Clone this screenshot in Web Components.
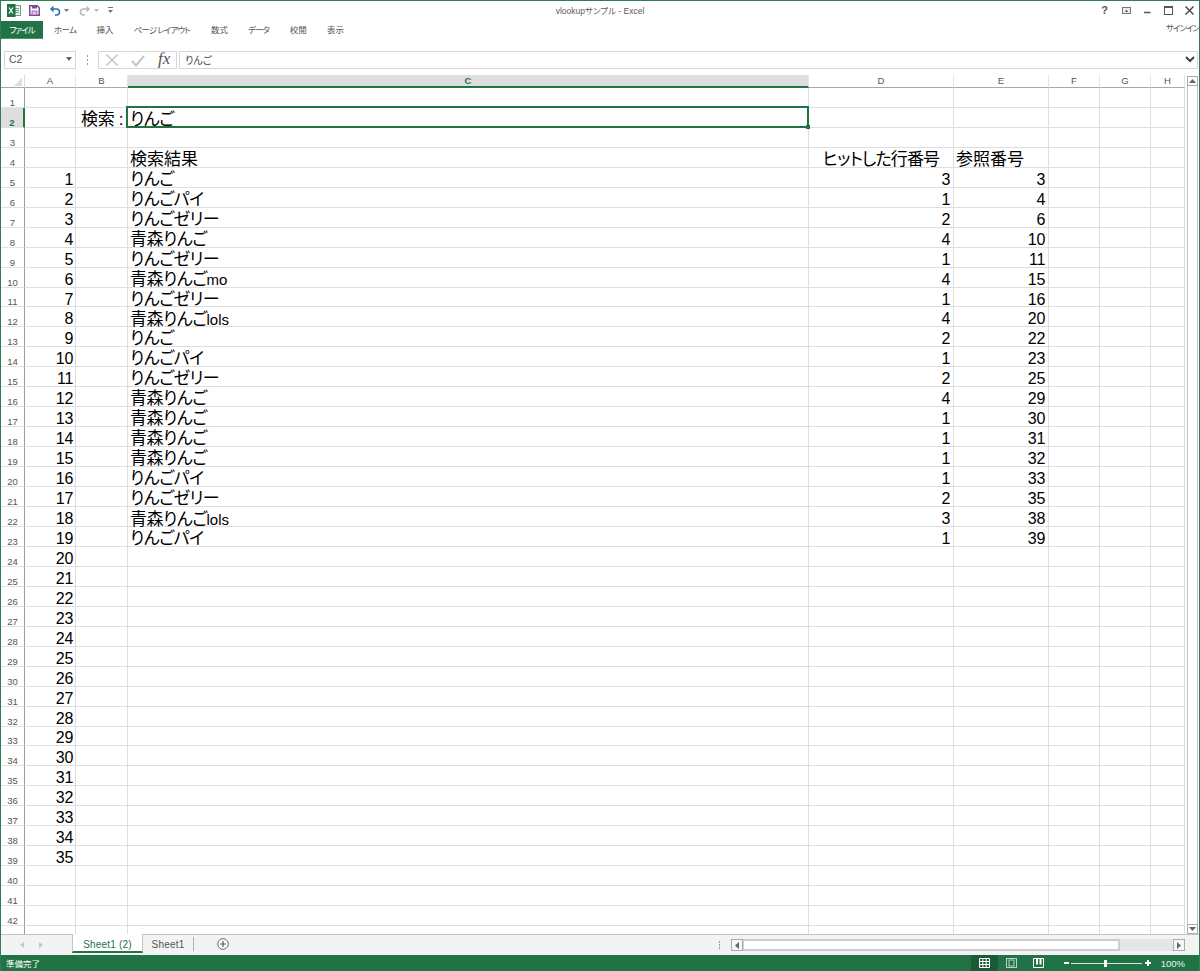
<!DOCTYPE html>
<html lang="ja"><head><meta charset="utf-8">
<style>
html,body{margin:0;padding:0;width:1200px;height:971px;overflow:hidden;background:#fff}
body{font-family:"Noto Sans CJK JP","Liberation Sans",sans-serif}
</style></head><body>
<xl-window></xl-window>
<script>
const UI='"Liberation Sans","Noto Sans CJK JP",sans-serif';
function el(name,html,cssText){
  customElements.define(name,class extends HTMLElement{
    connectedCallback(){ if(this.shadowRoot)return; const s=this.attachShadow({mode:'open'}); s.innerHTML='<style>'+cssText+'</style>'+(typeof html==='function'?html(this):html); }
  });
}
el('xl-titlebar',`
<div class="l">
<svg width="14" height="13" viewBox="0 0 14 13" style="margin-left:6px"><rect x="6.500" y="1.500" width="7" height="10" fill="#e9f1ec" stroke="#6d9a80"/><path d="M8 4.500h4M8 6.500h4M8 8.500h4" stroke="#6d9a80"/><rect x="0" y="0" width="8.500" height="13" fill="#1f7246"/><path d="M2 3.500l4 6M6 3.500l-4 6" stroke="#fff" stroke-width="1.300"/></svg>
<svg width="11" height="11" viewBox="0 0 11 11" style="margin-left:8px"><path d="M.75.750h7.500l2 2v7.500h-9.500z" fill="#fff" stroke="#80489c" stroke-width="1.500"/><rect x="3" y=".5" width="5" height="3" fill="#80489c"/><rect x="3" y="6" width="5" height="4" fill="#d9c6e4" stroke="#80489c" stroke-width=".7"/></svg>
<svg width="11" height="11" viewBox="0 0 11 11" style="margin-left:10px"><path d="M2.500 4h4a3 3 0 0 1 0 6H5" fill="none" stroke="#2f6fb0" stroke-width="1.600"/><path d="M0 4L3.500 .5v7z" fill="#2f6fb0"/></svg>
<svg width="5" height="3" viewBox="0 0 5 3" style="margin-left:3px"><path d="M0 0h5L2.500 3z" fill="#777"/></svg>
<svg width="11" height="11" viewBox="0 0 11 11" style="margin-left:10px"><path d="M8.500 4h-4a3 3 0 0 0 0 6H6" fill="none" stroke="#bbb" stroke-width="1.600"/><path d="M11 4L7.500 .5v7z" fill="#bbb"/></svg>
<svg width="5" height="3" viewBox="0 0 5 3" style="margin-left:4px"><path d="M0 0h5L2.500 3z" fill="#bbb"/></svg>
<svg width="5" height="6" viewBox="0 0 5 6" style="margin-left:9px"><path d="M0 .5h5" stroke="#777"/><path d="M0 3h5L2.500 6z" fill="#777"/></svg>
</div>
<div class="t">vlookupサンプル - Excel</div>
<div class="r">
<span class="q">?</span>
<svg width="9" height="7" viewBox="0 0 9 7" style="margin-left:14px"><rect x=".5" y=".5" width="8" height="6" fill="#eee" stroke="#777"/><path d="M3 5L4.500 2.500 6 5z" fill="#555"/></svg>
<svg width="7" height="7" viewBox="0 0 7 7" style="margin-left:13px"><path d="M0 5.500h6.500" stroke="#555" stroke-width="1.500"/></svg>
<svg width="9" height="9" viewBox="0 0 9 9" style="margin-left:13px"><rect x=".5" y=".5" width="8" height="8" fill="none" stroke="#555"/><path d="M.5 1h8" stroke="#555" stroke-width="2"/></svg>
<svg width="9" height="9" viewBox="0 0 9 9" style="margin-left:12px"><path d="M.5.500l8 8M8.500.500l-8 8" stroke="#444" stroke-width="1.400"/></svg>
</div>`,
`:host{display:flex;height:20px;box-sizing:border-box;padding-bottom:2px;align-items:center;justify-content:space-between;position:relative;font:9px ${UI};color:#555}
.l,.r{display:flex;align-items:center}.r{margin-right:5px}
.q{font:bold 11px ${UI};color:#555}
.t{position:absolute;left:0;right:0;top:3px;text-align:center;font:8.500px "Liberation Sans","Noto Sans CJK JP",sans-serif;font-feature-settings:"palt";color:#5b5b5b}`);
el('xl-ribbon',`<span class="f">ファイル</span><span class="tabs"><span style="letter-spacing:-.6px">ホーム</span><span>挿入</span><span style="letter-spacing:-.85px">ページ レイアウト</span><span style="margin-left:1px">数式</span><span style="letter-spacing:-1px">データ</span><span style="margin-left:1px">校閲</span><span>表示</span></span><span class="s">サインイン</span>`,
`:host{display:flex;height:20px;align-items:flex-start;font:8.500px "Noto Sans CJK JP",sans-serif;font-feature-settings:"palt";color:#555;position:relative}
.f{background:#217346;color:#fff;width:42px;line-height:17px;text-align:center;border-bottom:1px solid #4f9270;height:17px;letter-spacing:-1px}
.tabs{display:flex;gap:20px;margin-left:11px;line-height:16px}
.s{margin-left:auto;white-space:nowrap;line-height:12px;letter-spacing:-1px}`);
el('xl-formula',`
<div class="name"><span>C2</span><svg width="6" height="4" viewBox="0 0 6 4"><path d="M0 0h6L3 4z" fill="#666"/></svg></div>
<div class="grip"><i></i><i></i><i></i></div>
<div class="btns">
<svg width="14" height="14" viewBox="0 0 14 14"><path d="M1.500 1.500l11 11M12.500 1.500l-11 11" stroke="#c6c6c6" stroke-width="1.500"/></svg>
<svg width="14" height="14" viewBox="0 0 14 14" style="margin-left:12px"><path d="M1 8l4 4.500L13 3" fill="none" stroke="#c6c6c6" stroke-width="2"/></svg>
<span class="fx">fx</span></div>
<div class="input"><span>りんご</span><svg width="10" height="7" viewBox="0 0 10 7"><path d="M1 1l4 4 4-4" fill="none" stroke="#444" stroke-width="2"/></svg></div>`,
`:host{display:flex;height:18px;align-items:stretch;font:10px "Noto Sans CJK JP",sans-serif;font-feature-settings:"palt";color:#444;padding:0 1px 0 3px;box-sizing:border-box}
.name{width:72px;box-sizing:border-box;border:1px solid #d6d6d6;display:flex;align-items:center;justify-content:space-between;padding:0 3px 2px 4px;font:10.500px ${UI};color:#555}
.grip{width:22px;display:flex;flex-direction:column;align-items:center;justify-content:center;gap:2px}.grip i{width:1px;height:2px;background:#999;display:block}
.btns{width:79px;box-sizing:border-box;border:1px solid #d6d6d6;display:flex;align-items:center;padding-left:6px}
.fx{font:italic 17px "Liberation Serif",serif;margin-left:13px;color:#555;margin-top:-2px}
.input{flex:1;margin:0 0 0 2px;border:1px solid #d6d6d6;display:flex;align-items:center;justify-content:space-between;padding:0 2px 2px 5px}`);
const COLS=[['A',51],['B',52],['C',681],['D',145],['E',95],['F',51],['G',51],['H',34]];
const RH=19.96, ROWS=43;
const DATA=[['りんご',3,3],['りんごパイ',1,4],['りんごゼリー',2,6],['青森りんご',4,10],['りんごゼリー',1,11],['青森りんご<b>mo</b>',4,15],['りんごゼリー',1,16],['青森りんご<b>lols</b>',4,20],['りんご',2,22],['りんごパイ',1,23],['りんごゼリー',2,25],['青森りんご',4,29],['青森りんご',1,30],['青森りんご',1,31],['青森りんご',1,32],['りんごパイ',1,33],['りんごゼリー',2,35],['青森りんご<b>lols</b>',3,38],['りんごパイ',1,39]];
el('xl-grid',()=>{
  let h='<div class="corner"><svg width="8" height="8" viewBox="0 0 8 8"><path d="M8 0v8H0z" fill="#dcdcdc"/></svg></div>';
  COLS.forEach(([n])=>{h+=`<div class="ch${n==='C'?' sel':''}">${n}</div>`});
  for(let r=1;r<=ROWS;r++){
    h+=`<div class="rh${r===2?' sel':''}"><span>${r<43?r:''}</span></div>`;
    COLS.forEach(([n])=>{
      let t='',c='';
      if(n==='A'&&r>=5&&r<=39){t=r-4;c=' num'}
      if(n==='B'&&r===2){t='検索 :';c=' lbl'}
      if(n==='C'){c=' k'}
      if(n==='C'&&r===2){t='りんご'}
      if(n==='C'&&r===4){t='検索結果';c=' h'}
      if(n==='D'&&r===4){t='ヒットした行番号';c=' ctr'}
      if(n==='E'&&r===4){t='参照番号';c=' h'}
      const d=DATA[r-5];
      if(d){ if(n==='C')t=d[0]; if(n==='D'){t=d[1];c=' num r3'} if(n==='E'){t=d[2];c=' num r3'} }
      h+=`<div class="c${c}"><span>${t}</span></div>`;
    });
  }
  h+='<div class="cursor"><i></i></div>';
  return h;
},`:host{display:grid;grid-template-columns:24px ${COLS.map(c=>c[1]+'px').join(' ')};grid-template-rows:13px repeat(${ROWS},${RH}px);position:relative;height:859px;overflow:hidden;align-content:start;font:17px "Liberation Sans","Noto Sans CJK JP",sans-serif;font-feature-settings:"palt";color:#000}
.corner{background:#fff;border-right:1px solid #dcdcdc;border-bottom:1px solid #a8a8a8;box-sizing:border-box;display:flex;align-items:flex-end;justify-content:flex-end;padding:0 2px 1px 0}
.ch{font:9.500px ${UI};color:#555;text-align:center;line-height:12px;border-right:1px solid #e4e4e4;border-bottom:1px solid #a8a8a8;box-sizing:border-box}
.ch.sel{background:#dedede;color:#217346;font-weight:bold;border-bottom:2px solid #217346}
.rh{font:9.500px ${UI};color:#555;border-right:1px solid #9e9e9e;border-bottom:1px solid #e2e2e2;box-sizing:border-box;text-align:center;display:flex;align-items:flex-end;justify-content:center;line-height:8px}
.rh span{display:block}
.rh.sel{background:#dedede;color:#217346;font-weight:bold;border-right:2px solid #217346}
.c{border-right:1px solid #dedede;border-bottom:1px solid #dedede;box-sizing:border-box;white-space:nowrap;display:flex;align-items:center;padding:5px 2px 0 3px;line-height:16px;min-width:0}
.c>span{display:block}
.k,.h{padding-left:2px}.k{letter-spacing:-.5px}
.c b{font:15px "Liberation Sans",sans-serif;letter-spacing:0}
.num{justify-content:flex-end;font:16px "Liberation Sans",sans-serif;letter-spacing:-.3px;padding:5px 2px 0 3px}
.r3{padding-right:3px}
.lbl{padding-left:5px;letter-spacing:-.3px}.ctr{justify-content:center;padding-left:0;padding-right:0;letter-spacing:-.85px}
.cursor{position:absolute;left:125px;top:31px;width:683px;height:22px;box-sizing:border-box;border:2px solid #217346;pointer-events:none}
.cursor i{position:absolute;right:-3px;bottom:-3px;width:4px;height:4px;background:#217346}`);
el('xl-vscroll',`<div class="b"><svg width="7" height="4" viewBox="0 0 7 4"><path d="M3.500 0l3.500 4H0z" fill="#666"/></svg></div><div class="tr"></div><div class="b"><svg width="7" height="4" viewBox="0 0 7 4"><path d="M0 0h7L3.500 4z" fill="#666"/></svg></div>`,
`:host{display:flex;flex-direction:column;width:11px;background:#fff;box-sizing:border-box;margin:1px 1px 0 2px;height:858px}
.b{height:10px;border:1px solid #ababab;box-sizing:border-box;display:flex;align-items:center;justify-content:center;background:#fff}
.tr{flex:1;border-left:1px solid #c4c4c4;border-right:1px solid #c4c4c4}`);
el('xl-sheetbar',`
<div class="nav"><svg width="4" height="6" viewBox="0 0 4 6"><path d="M4 0v6L0 3z" fill="#c4c4c4"/></svg><svg width="4" height="6" viewBox="0 0 4 6"><path d="M0 0v6l4-3z" fill="#c4c4c4"/></svg></div>
<div class="tab on">Sheet1 (2)</div><div class="tab">Sheet1</div><div class="sep"></div>
<svg class="add" width="12" height="12" viewBox="0 0 12 12"><circle cx="6" cy="6" r="5.300" fill="#fff" stroke="#666"/><path d="M6 3v6M3 6h6" stroke="#555" stroke-width="1.200"/></svg>
<div class="grip"><i></i><i></i><i></i></div>
<div class="hs">
<div class="b"><svg width="4" height="7" viewBox="0 0 4 7"><path d="M4 0v7L0 3.500z" fill="#666"/></svg></div>
<div class="thumb"></div><div class="rest"></div>
<div class="b"><svg width="4" height="7" viewBox="0 0 4 7"><path d="M0 0v7l4-3.500z" fill="#666"/></svg></div>
</div>`,
`:host{display:flex;height:21px;align-items:flex-start;background:#f3f3f3;border-top:1px solid #c4c4c4;box-sizing:border-box;position:relative;font:10px ${UI};letter-spacing:.2px;color:#555}
.nav{width:71px;height:20px;display:flex;gap:15px;align-items:center;justify-content:flex-start;padding-left:19px;box-sizing:border-box}
.tab{text-align:center;box-sizing:border-box}
.tab.on{box-sizing:content-box;width:69px;height:16px;padding-top:1px;line-height:20px;background:#fff;color:#217346;border-bottom:2px solid #217346;border-left:1px solid #c4c4c4;border-right:1px solid #c4c4c4;margin-top:-1px}
.tab:not(.on){width:50px;line-height:19px}
.sep{width:1px;height:14px;background:#b0b0b0;margin-top:2px}
.add{margin:3px 0 0 23px}
.grip{position:absolute;left:718px;top:6px;display:flex;flex-direction:column;gap:1px}.grip i{width:1px;height:2px;background:#999;display:block}
.hs{position:absolute;left:730px;top:4px;width:454px;height:12px;display:flex;background:#e6e6e6}
.b{width:12px;height:12px;border:1px solid #ababab;box-sizing:border-box;background:#f6f6f6;display:flex;align-items:center;justify-content:center}
.thumb{width:377px;border:2px solid #cdcdcd;border-left-width:1px;background:#fff;box-sizing:border-box;height:12px}.rest{flex:1}`);
el('xl-status',`<span class="t">準備完了</span>
<div class="r">
<div class="v on"><svg width="11" height="10" viewBox="0 0 11 10"><path d="M.5.500h10v9H.5zM.5 3.500h10M.5 6.500h10M3.800.500v9M7.200.500v9" fill="none" stroke="#fff" stroke-width="1"/></svg></div>
<div class="v"><svg width="11" height="10" viewBox="0 0 11 10"><rect x=".5" y=".5" width="10" height="9" fill="none" stroke="#b9d4c5"/><rect x="3" y="2" width="5" height="6" fill="none" stroke="#b9d4c5"/></svg></div>
<div class="v"><svg width="11" height="10" viewBox="0 0 11 10"><path d="M.5.500h10v9H.5z" fill="none" stroke="#fff"/><path d="M3 .500h2v6H3zM6.500.500h2v6h-2z" fill="#fff"/></svg></div>
<span class="m"></span><div class="sl"><i></i></div><span class="p"></span><span class="z">100%</span>
</div>`,
`:host{display:flex;height:16px;background:#217346;color:#fff;align-items:center;justify-content:space-between;font:8.500px "Noto Sans CJK JP",sans-serif;position:relative}
.t{margin-left:5px}.r{display:flex;align-items:center;height:16px;margin-right:14px}
.v{width:27px;height:16px;display:flex;align-items:center;justify-content:center}.v.on{background:#1a5a38}
.m{width:5px;height:2px;background:#fff;margin-left:12px}
.p{width:6px;height:6px;margin-left:3px;background:linear-gradient(#fff,#fff) center/6px 2px no-repeat,linear-gradient(#fff,#fff) center/2px 6px no-repeat}
.sl{width:71px;height:1px;background:#d8e8de;position:relative;margin:0 0 0 2px}
.sl i{position:absolute;left:33px;top:-3px;width:3px;height:7px;background:#fff}
.z{font:9.500px ${UI};margin-left:10px;color:#eaf3ee}`);
el('xl-window',`<div class="win"><xl-titlebar></xl-titlebar><xl-ribbon></xl-ribbon><div class="gap"></div><xl-formula></xl-formula><div class="gap2"></div><div class="main"><xl-grid></xl-grid><xl-vscroll></xl-vscroll></div><xl-sheetbar></xl-sheetbar><xl-status></xl-status></div>`,
`:host{display:block;width:1200px;height:971px;box-sizing:border-box;background:#fff}
.win{height:971px;box-sizing:border-box;border:solid #2f7d56;border-width:1px 1px 0 1px;display:flex;flex-direction:column}
.gap{height:10px}.gap2{height:6px}
.main{display:flex;height:859px;flex:none}`);
</script></body></html>
